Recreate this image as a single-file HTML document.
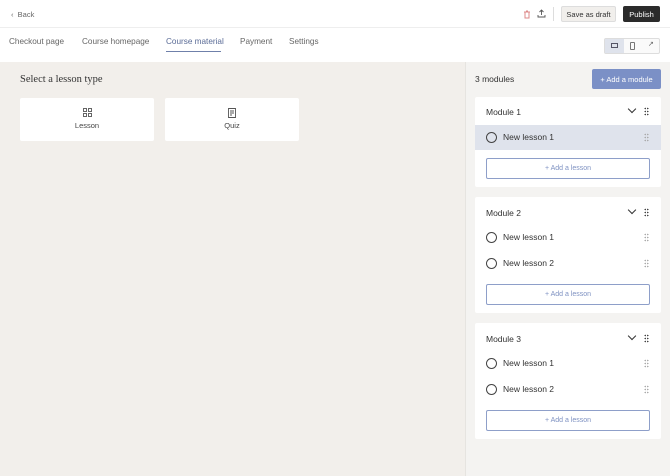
<!DOCTYPE html>
<html><head><meta charset="utf-8"><style>
*{box-sizing:border-box;margin:0;padding:0}
body{width:670px;height:476px;overflow:hidden;font-family:"Liberation Sans",sans-serif;background:#f2efeb;position:relative;color:#333}
.top{position:absolute;left:0;top:0;width:670px;height:28px;background:#fff;border-bottom:1px solid #eee}
.tabs{position:absolute;left:0;top:28px;width:670px;height:34px;background:#fff}
.tab{position:absolute;top:9px;font-size:8.2px;color:#666}
.abs{position:absolute}
.fc{display:flex;align-items:center;justify-content:center}
.right{position:absolute;left:465px;top:62px;width:205px;height:414px;background:#f4f3f1;border-left:1px solid #e6e4e0}
.card{position:absolute;left:475px;width:186px;background:#fff;border-radius:2px}
.mh{position:absolute;left:11px;font-size:8.5px;color:#333}
.row{position:absolute;left:0;width:186px;height:25px}
.circ{position:absolute;left:11px;top:7px;width:11px;height:11px;border:1px solid #444;border-radius:50%}
.lt{position:absolute;left:28px;top:7px;font-size:8.5px;color:#333}
.dots{position:absolute;right:12px;top:8px;width:5px;height:9px;background-image:radial-gradient(circle,#aaa 0.7px,transparent 0.9px);background-size:2.5px 3px}
.add{position:absolute;left:11px;width:164px;height:21px;border:1px solid #8e9fc9;border-radius:2px;font-size:7px;color:#7f92c2}
.chev{position:absolute;right:26px;width:6px;height:6px;border-right:1.2px solid #333;border-bottom:1.2px solid #333;transform:rotate(45deg)}
.hd{position:absolute;right:12px;width:5px;height:9px;background-image:radial-gradient(circle,#444 0.7px,transparent 0.9px);background-size:2.5px 3px}
.opt{position:absolute;top:98px;width:134px;height:43px;background:#fff;border-radius:2px;text-align:center;font-size:7.5px;color:#444}
</style></head><body>
<div class="top">
 <div class="abs" style="left:11px;top:10px;font-size:7.5px;color:#666">‹&nbsp;&nbsp;Back</div>
 <svg class="abs" style="left:523px;top:10px" width="8" height="9" viewBox="0 0 8 9"><path d="M1 2h6M3 1h2M2 2v6h4V2" fill="none" stroke="#d88" stroke-width="1"/></svg>
 <svg class="abs" style="left:537px;top:9px" width="9" height="9" viewBox="0 0 9 9"><path d="M4.5 6V1M2.5 3l2-2 2 2M1 6v2h7V6" fill="none" stroke="#555" stroke-width="0.9"/></svg>
 <div class="abs" style="left:553px;top:7px;width:1px;height:14px;background:#ddd"></div>
 <div class="abs fc" style="left:561px;top:6px;width:55px;height:16px;background:#f1efec;border:1px solid #ddd;border-radius:2px;font-size:7.5px;color:#333">Save as draft</div>
 <div class="abs fc" style="left:623px;top:6px;width:37px;height:16px;background:#2b2b2b;border-radius:2px;font-size:7.5px;color:#fff">Publish</div>
</div>
<div class="tabs">
 <div class="tab" style="left:9px">Checkout page</div>
 <div class="tab" style="left:82px">Course homepage</div>
 <div class="tab" style="left:166px;color:#5a6b96">Course material</div>
 <div class="abs" style="left:166px;top:23px;width:55px;height:1px;background:#6f80aa"></div>
 <div class="tab" style="left:240px">Payment</div>
 <div class="tab" style="left:289px">Settings</div>
 <div class="abs" style="left:604px;top:10px;width:56px;height:16px;border:1px solid #ddd;border-radius:2px;background:#fafafa"></div>
 <div class="abs" style="left:605px;top:11px;width:19px;height:14px;background:#dfe3ec"></div>
 <div class="abs" style="left:611px;top:15px;width:7px;height:5px;border:1px solid #556"></div>
 <div class="abs" style="left:630px;top:14px;width:5px;height:8px;border:1px solid #777;border-radius:1px"></div>
 <div class="abs" style="left:648px;top:12px;font-size:7px;color:#666">↗</div>
</div>
<div class="abs" style="left:20px;top:74px;font-family:'Liberation Serif',serif;font-size:10.5px;color:#333">Select a lesson type</div>
<div class="opt" style="left:20px"><svg style="margin-top:10px" width="9" height="9" viewBox="0 0 9 9"><g fill="none" stroke="#555" stroke-width="0.9"><rect x="0.5" y="0.5" width="3" height="3"/><rect x="5.5" y="0.5" width="3" height="3"/><rect x="0.5" y="5.5" width="3" height="3"/><rect x="5.5" y="5.5" width="3" height="3"/></g></svg><div style="margin-top:2px">Lesson</div></div>
<div class="opt" style="left:165px"><svg style="margin-top:10px" width="9" height="10" viewBox="0 0 9 10"><path d="M0.5 0.5h7v9h-7zM2 3h4M2 5h4M2 7h2" fill="none" stroke="#555" stroke-width="0.9"/></svg><div style="margin-top:1px">Quiz</div></div>
<div class="right"></div>
<div class="abs" style="left:475px;top:74px;font-size:8.5px;color:#333">3 modules</div>
<div class="abs fc" style="left:592px;top:69px;width:69px;height:20px;background:#7b90c6;border-radius:2px;color:#fff;font-size:7.5px">+ Add a module</div>

<div class="card" style="top:97px;height:90px">
 <div class="mh" style="top:10px">Module 1</div><div class="chev" style="top:9px"></div><div class="hd" style="top:10px"></div>
 <div class="row" style="top:28px;background:#dfe3ec"><div class="circ"></div><div class="lt">New lesson 1</div><div class="dots"></div></div>
 <div class="add fc" style="top:61px">+ Add a lesson</div>
</div>
<div class="card" style="top:197px;height:116px">
 <div class="mh" style="top:11px">Module 2</div><div class="chev" style="top:10px"></div><div class="hd" style="top:11px"></div>
 <div class="row" style="top:28px"><div class="circ"></div><div class="lt">New lesson 1</div><div class="dots"></div></div>
 <div class="row" style="top:54px"><div class="circ"></div><div class="lt">New lesson 2</div><div class="dots"></div></div>
 <div class="add fc" style="top:87px">+ Add a lesson</div>
</div>
<div class="card" style="top:323px;height:116px">
 <div class="mh" style="top:11px">Module 3</div><div class="chev" style="top:10px"></div><div class="hd" style="top:11px"></div>
 <div class="row" style="top:28px"><div class="circ"></div><div class="lt">New lesson 1</div><div class="dots"></div></div>
 <div class="row" style="top:54px"><div class="circ"></div><div class="lt">New lesson 2</div><div class="dots"></div></div>
 <div class="add fc" style="top:87px">+ Add a lesson</div>
</div>
</body></html>
